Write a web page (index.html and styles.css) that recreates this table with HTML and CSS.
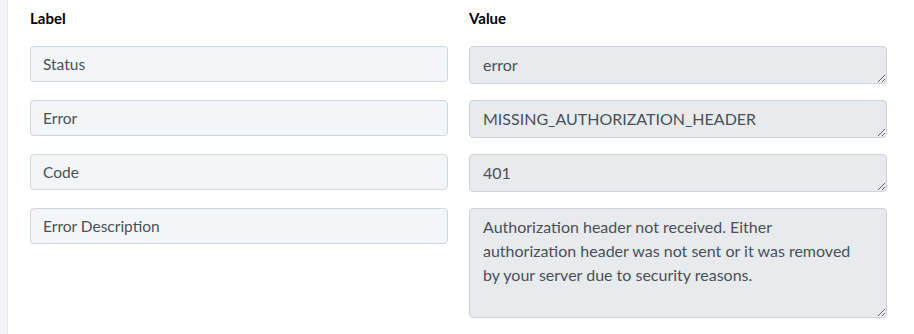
FILE: index.html
```html
<!DOCTYPE html>
<html lang="en">
<head>
<meta charset="utf-8">
<title>Response fields</title>
<link rel="stylesheet" href="styles.css">
</head>
<body>
<div class="page">
  <aside class="rail"></aside>
  <main class="panel">
    <div class="grid">
      <div class="head">Label</div>
      <div class="head">Value</div>

      <input class="label-field" type="text" value="Status" readonly>
      <textarea class="value-field" readonly>error</textarea>

      <input class="label-field" type="text" value="Error" readonly>
      <textarea class="value-field" readonly>MISSING_AUTHORIZATION_HEADER</textarea>

      <input class="label-field" type="text" value="Code" readonly>
      <textarea class="value-field" readonly>401</textarea>

      <input class="label-field" type="text" value="Error Description" readonly>
      <textarea class="value-field tall" readonly>Authorization header not received. Either authorization header was not sent or it was removed by your server due to security reasons.</textarea>
    </div>
  </main>
</div>
</body>
</html>
```

FILE: styles.css
```css
* { box-sizing: border-box; }

html, body {
  margin: 0;
  padding: 0;
  background: #ffffff;
  font-family: Lato, "Open Sans", sans-serif;
  color: #495057;
}

.page {
  display: flex;
  min-height: 334px;
}

.rail {
  width: 8px;
  flex: none;
  background: #f0f3f8;
  box-shadow: inset -1px 0 0 #e6eaf0;
}

.panel {
  flex: 1;
  padding: 9px 0 0 22px;
}

.grid {
  display: grid;
  grid-template-columns: 418px 418px;
  column-gap: 21px;
  row-gap: 16px;
  align-items: start;
}

.head {
  font-size: 15px;
  font-weight: 700;
  color: #000000;
  line-height: 18px;
  margin-bottom: 3px;
}

.label-field {
  width: 100%;
  height: 36px;
  padding: 0 12px;
  font-family: inherit;
  font-size: 15.5px;
  color: #495057;
  background: #f3f6f9;
  border: 1px solid #cfd6de;
  border-radius: 4px;
  outline: none;
}

.value-field {
  display: block;
  width: 100%;
  height: 38px;
  padding: 6px 18px 6px 13px;
  font-family: inherit;
  font-size: 16px;
  line-height: 24px;
  color: #495057;
  background: #e8ebee;
  border: 1px solid #ced4da;
  border-radius: 4px;
  resize: vertical;
  overflow: hidden;
  outline: none;
}

.value-field.tall {
  height: 110px;
}
```
